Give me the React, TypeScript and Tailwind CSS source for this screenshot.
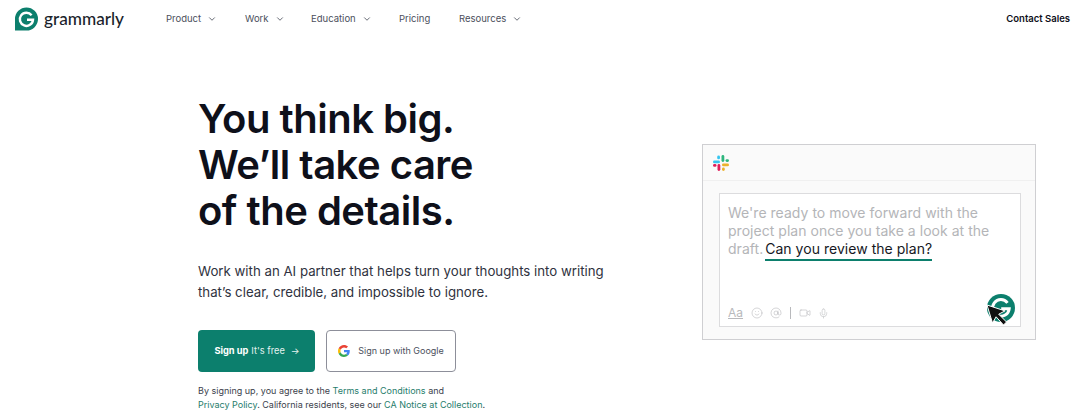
import { ChevronDown, Smile, AtSign, Video, Mic } from "lucide-react";

const navItems = [
  { label: "Product", width: "w-[79px]", caret: true },
  { label: "Work", width: "w-[66px]", caret: true },
  { label: "Education", width: "w-[88px]", caret: true },
  { label: "Pricing", width: "w-[60px]", caret: false },
  { label: "Resources", width: "w-[70px]", caret: true },
];

function GrammarlyLogo() {
  return (
    <svg width="25" height="24" viewBox="0 0 25 24">
      <path d="M12.5 0.5a11.5 11.5 0 1 1 0 23H1V12A11.5 11.5 0 0 1 12.5 0.5z" fill="#0c7f6d" />
      <path
        d="M17.6 8.2a6.6 6.6 0 1 0 1.4 4.6h-6"
        fill="none"
        stroke="#fff"
        strokeWidth="2.4"
      />
    </svg>
  );
}

function GoogleIcon() {
  return (
    <svg width="12" height="12" viewBox="0 0 48 48">
      <path fill="#EA4335" d="M24 9.5c3.5 0 6.7 1.2 9.2 3.600l6.900-6.900C35.900 2.400 30.400 0 24 0 14.600 0 6.500 5.400 2.600 13.200l8 6.200C12.500 13.600 17.800 9.500 24 9.500z" />
      <path fill="#4285F4" d="M47 24.500c0-1.600-.1-3.100-.4-4.500H24v9h12.900c-.6 3-2.200 5.500-4.700 7.200l7.700 6C44.400 38.000 47 31.800 47 24.500z" />
      <path fill="#FBBC05" d="M10.600 28.600c-.5-1.400-.8-3-.8-4.600s.3-3.200.8-4.600l-8-6.200C.9 16.500 0 20.100 0 24s.9 7.500 2.600 10.800l8-6.200z" />
      <path fill="#34A853" d="M24 48c6.500 0 11.900-2.100 15.900-5.800l-7.700-6c-2.200 1.400-4.900 2.300-8.200 2.300-6.200 0-11.500-4.100-13.400-9.900l-8 6.200C6.500 42.600 14.600 48 24 48z" />
    </svg>
  );
}

function SlackIcon() {
  return (
    <svg width="18" height="18" viewBox="0 0 18 18">
      <rect x="1" y="6.500" width="7" height="2.800" rx="1.400" fill="#36c5f0" />
      <rect x="5.200" y="1.500" width="2.800" height="3.800" rx="1.400" fill="#36c5f0" />
      <rect x="9.500" y="1" width="2.800" height="7" rx="1.400" fill="#2eb67d" />
      <rect x="13.500" y="5.200" width="3.500" height="2.800" rx="1.400" fill="#2eb67d" />
      <rect x="10" y="9.500" width="7" height="2.800" rx="1.400" fill="#ecb22e" />
      <rect x="10" y="13.500" width="2.800" height="3.500" rx="1.400" fill="#ecb22e" />
      <rect x="5.500" y="10" width="2.800" height="7" rx="1.400" fill="#e01e5a" />
      <rect x="1" y="10" width="3.500" height="2.800" rx="1.400" fill="#e01e5a" />
    </svg>
  );
}

function FloatingBadge() {
  return (
    <div className="relative w-[28px] h-[28px]">
      <svg width="28" height="28" viewBox="0 0 28 28">
        <circle cx="14" cy="14" r="14" fill="#0c7f6d" />
        <path
          d="M20.500 8.800a8.300 8.300 0 1 0 1.700 6h-8"
          fill="none"
          stroke="#fff"
          strokeWidth="3"
        />
      </svg>
      <svg
        className="absolute left-[-1px] top-[10px]"
        width="24"
        height="24"
        viewBox="0 0 24 24"
      >
        <path
          d="M1 1l5.500 18 3.600-6.200 7.400 8.200 3-3-7.800-7.800 6.300-3.300z"
          fill="#111"
          stroke="#fff"
          strokeWidth="1"
        />
      </svg>
    </div>
  );
}

export default function App() {
  return (
    <div className="h-[417px] w-[1080px] overflow-hidden bg-white font-['Inter',sans-serif] text-[#0e101a]">
      <header className="flex items-center h-[38px] pl-[14px] pr-[10px]">
        <div className="flex items-center w-[152px] gap-[5px]">
          <GrammarlyLogo />
          <span className="font-['Lato',sans-serif] text-[17.200px] font-medium text-[#1b1f2b]">
            grammarly
          </span>
        </div>
        <nav className="flex items-center">
          {navItems.map((item) => (
            <div
              key={item.label}
              className={`flex items-center gap-[6px] text-[9.500px] text-[#4b4f5c] ${item.width}`}
            >
              {item.label}
              {item.caret && <ChevronDown size={10} strokeWidth={2} />}
            </div>
          ))}
        </nav>
        <div className="ml-auto text-[9.500px] font-semibold text-[#0e101a]">
          Contact Sales
        </div>
      </header>

      <main className="flex pl-[198px] pt-[58px]">
        <section className="w-[504px]">
          <h1 className="text-[40px] leading-[46px] font-semibold tracking-[-0.5px] text-[#0e101a]">
            You think big.
            <br />
            We’ll take care
            <br />
            of the details.
          </h1>
          <p className="mt-[27px] text-[13.250px] leading-[21px] text-[#2f3240]">
            Work with an AI partner that helps turn your thoughts into writing
            <br />
            that’s clear, credible, and impossible to ignore.
          </p>
          <div className="flex gap-[11px] mt-[27px]">
            <button className="flex items-center justify-center gap-[3px] pl-[1px] w-[117px] h-[42px] rounded-[4px] bg-[#0c7f6d] text-[9.250px] text-[#e6f3f0]">
              <span className="font-bold text-white">Sign up</span> It's free
              <span className="ml-[3px]">→</span>
            </button>
            <button className="flex items-center justify-center gap-[8px] w-[130px] h-[42px] rounded-[4px] border border-[#8d8f9a] text-[9px] text-[#4b4f5c]">
              <GoogleIcon />
              Sign up with Google
            </button>
          </div>
          <p className="mt-[12px] text-[9px] leading-[14px] text-[#3c3f4c]">
            By signing up, you agree to the{" "}
            <span className="text-[#1f7d6c]">Terms and Conditions</span> and
            <br />
            <span className="text-[#1f7d6c]">Privacy Policy</span>. California
            residents, see our{" "}
            <span className="text-[#1f7d6c]">CA Notice at Collection</span>.
          </p>
        </section>

        <section className="mt-[48px] w-[334px] h-[196px] border border-[#cfcfd2] bg-[#fafafa] flex flex-col">
          <div className="flex items-center h-[36px] pl-[9px] border-b border-[#f0f0f0]">
            <SlackIcon />
          </div>
          <div className="mx-[16px] mt-[12px] w-[302px] h-[134px] border border-[#dcdcde] bg-white flex flex-col px-[8px] pt-[10px]">
            <p className="text-[14px] leading-[18px] tracking-[0.03px] text-[#b4b5b8]">
              We're ready to move forward with the
              <br />
              project plan once you take a look at the
              <br />
              draft.
              <span className="inline-block ml-[2px] text-[#16181f] border-b-2 border-[#0c7f6d] pb-[1px] leading-[18px]">
                Can you review the plan?
              </span>
            </p>
            <div className="mt-auto mb-[2px] flex items-end justify-between">
              <div className="flex items-center gap-[5px] text-[#b8b9bc] pb-[2px]">
                <span className="text-[12px] underline w-[18px]">Aa</span>
                <Smile size={12} strokeWidth={1.200} className="mr-[2px]" />
                <AtSign size={12} strokeWidth={1.200} />
                <span className="w-px h-[12px] bg-[#b8b9bc] mx-[3px]" />
                <Video size={12} strokeWidth={1.200} />
                <Mic size={11} strokeWidth={1.200} className="ml-[2px]" />
              </div>
              <div className="mr-[-3px] mb-[2px]">
                <FloatingBadge />
              </div>
            </div>
          </div>
        </section>
      </main>
    </div>
  );
}
